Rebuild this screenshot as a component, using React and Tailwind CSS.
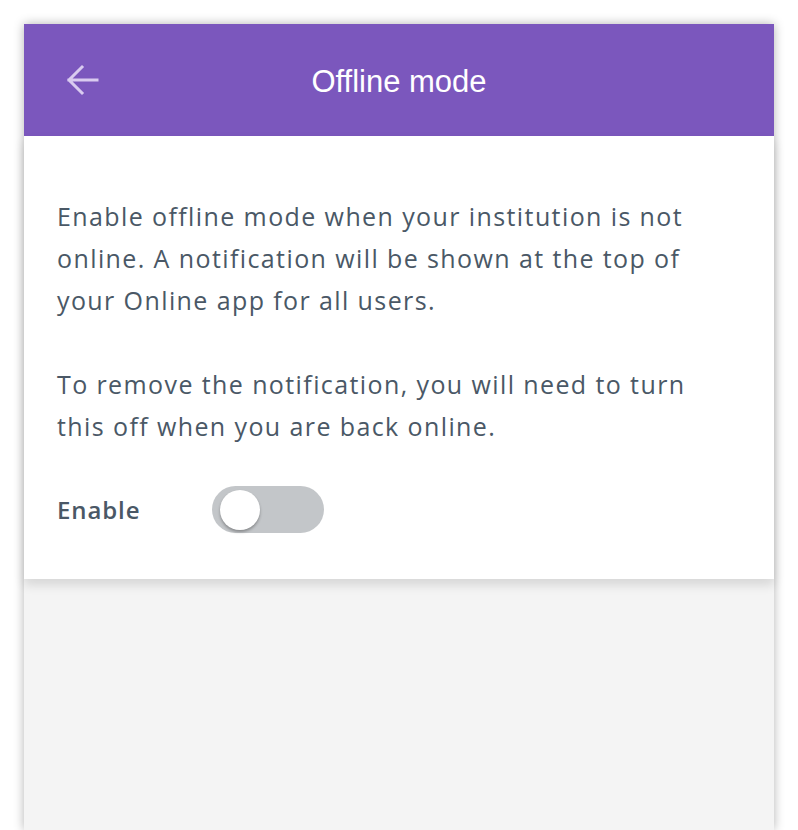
import React, { useState } from 'react';

const BackArrow = () => (
  <svg width="34" height="34" viewBox="0 0 34 34" fill="none">
    <path d="M32 17H4M17 4L4 17l13 13" stroke="#d9cbf0" strokeWidth="3" strokeLinecap="square" />
  </svg>
);

const Toggle = ({ on, onChange }) => (
  <button
    type="button"
    onClick={() => onChange(!on)}
    className={`relative w-[112px] h-[47px] rounded-full ${on ? 'bg-[#7b57bd]' : 'bg-[#c3c6c9]'}`}
  >
    <span
      className={`absolute top-[4px] w-[40px] h-[40px] rounded-full bg-white shadow-[0_2px_3px_rgba(0,0,0,0.3)] ${on ? 'left-[68px]' : 'left-[8px]'}`}
    />
  </button>
);

const App = () => {
  const [enabled, setEnabled] = useState(false);

  return (
    <div className="w-[798px] h-[830px] bg-white pt-[24px] px-[24px] overflow-hidden">
      <div className="h-full bg-[#f4f4f4] flex flex-col shadow-[0_0_10px_rgba(0,0,0,0.3)]">
        <div className="h-[112px] bg-[#7b57bd] flex items-center px-[41px] relative">
          <BackArrow />
          <h1
            className="absolute inset-x-0 top-[39px] text-center text-white text-[31px] leading-[38px]"
            style={{ fontFamily: '"Liberation Sans", Arial, sans-serif' }}
          >
            Offline mode
          </h1>
        </div>

        <div
          className="bg-white pt-[59px] pb-[46px] px-[33px] text-[#4a5866] shadow-[0_6px_10px_rgba(0,0,0,0.12)] relative"
          style={{ fontFamily: '"Open Sans", sans-serif' }}
        >
          <p className="text-[25px] leading-[42px] tracking-[1.4px] pr-[30px]">
            Enable offline mode when your institution is not online. A notification will be shown at the top of your Online app for all users.
          </p>
          <p className="text-[25px] leading-[42px] tracking-[1.4px] mt-[42px] pr-[30px]">
            To remove the notification, you will need to turn this off when you are back online.
          </p>

          <div className="flex items-center mt-[39px]">
            <span className="w-[155px] text-[24px] font-semibold tracking-[0.9px]">Enable</span>
            <Toggle on={enabled} onChange={setEnabled} />
          </div>
        </div>
      </div>
    </div>
  );
};

export default App;
